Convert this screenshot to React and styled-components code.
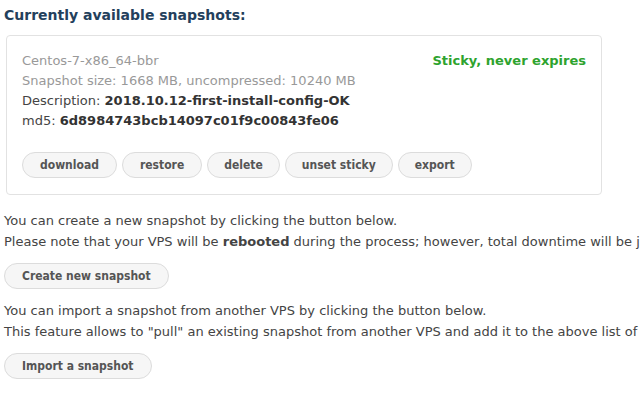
import styled, { createGlobalStyle } from 'styled-components'

const GlobalStyle = createGlobalStyle`
  body {
    margin: 0;
    background: #fff;
    font-family: "DejaVu Sans", Verdana, sans-serif;
    font-size: 13px;
    color: #444;
  }
`

const Page = styled.div`
  width: 640px;
  height: 409px;
  overflow: hidden;
  padding: 0 4px;
  box-sizing: border-box;
  white-space: nowrap;
`

const Title = styled.h2`
  margin: 0;
  padding-top: 6px;
  font-size: 14px;
  line-height: 18px;
  font-weight: bold;
  color: #23405c;
`

const Card = styled.div`
  margin: 11px 0 0 2px;
  width: 596px;
  box-sizing: border-box;
  border: 1px solid #e2e2e2;
  border-radius: 4px;
  padding: 15px 15px 16px 15px;
`

const InfoRow = styled.div`
  display: flex;
  justify-content: space-between;
  align-items: flex-start;
`

const Lines = styled.div`
  display: flex;
  flex-direction: column;
`

const Line = styled.div`
  line-height: 20px;
  color: ${(p) => (p.$muted ? '#999' : '#444')};

  & b {
    color: #333;
  }
`

const Status = styled.div`
  line-height: 20px;
  font-weight: bold;
  color: #2ea32e;
`

const ButtonRow = styled.div`
  display: flex;
  gap: 5px;
  margin-top: 21px;
`

const Pill = styled.button`
  height: 26px;
  padding: 0 ${(p) => p.$pad || 17}px;
  border: 1px solid #dcdcdc;
  border-radius: 13px;
  background: #f6f6f6;
  font-family: "DejaVu Sans Condensed", "DejaVu Sans", sans-serif;
  font-size: 12px;
  font-weight: bold;
  color: #555;
  cursor: pointer;
`

const Section = styled.div`
  margin-top: ${(p) => p.$top}px;
`

const Text = styled.p`
  margin: 0;
  line-height: 21px;
  color: #444;
`

const SectionButton = styled(Pill)`
  display: block;
  margin-top: ${(p) => p.$gap}px;
`

const actions = [
  { label: 'download', pad: 17 },
  { label: 'restore', pad: 17 },
  { label: 'delete', pad: 16 },
  { label: 'unset sticky', pad: 16 },
  { label: 'export', pad: 16 },
]

export default function App() {
  return (
    <>
      <GlobalStyle />
      <Page>
        <Title>Currently available snapshots:</Title>
        <Card>
          <InfoRow>
            <Lines>
              <Line $muted>Centos-7-x86_64-bbr</Line>
              <Line $muted>Snapshot size: 1668 MB, uncompressed: 10240 MB</Line>
              <Line>
                Description: <b>2018.10.12-first-install-config-OK</b>
              </Line>
              <Line>
                md5: <b>6d8984743bcb14097c01f9c00843fe06</b>
              </Line>
            </Lines>
            <Status>Sticky, never expires</Status>
          </InfoRow>
          <ButtonRow>
            {actions.map((a) => (
              <Pill key={a.label} $pad={a.pad}>
                {a.label}
              </Pill>
            ))}
          </ButtonRow>
        </Card>
        <Section $top={15}>
          <Text>You can create a new snapshot by clicking the button below.</Text>
          <Text>
            Please note that your VPS will be <b>rebooted</b> during the process; however, total downtime will be just a few minutes.
          </Text>
          <SectionButton $gap={11}>Create new snapshot</SectionButton>
        </Section>
        <Section $top={11}>
          <Text>You can import a snapshot from another VPS by clicking the button below.</Text>
          <Text>
            This feature allows to "pull" an existing snapshot from another VPS and add it to the above list of available snapshots.
          </Text>
          <SectionButton $gap={11}>Import a snapshot</SectionButton>
        </Section>
      </Page>
    </>
  )
}
